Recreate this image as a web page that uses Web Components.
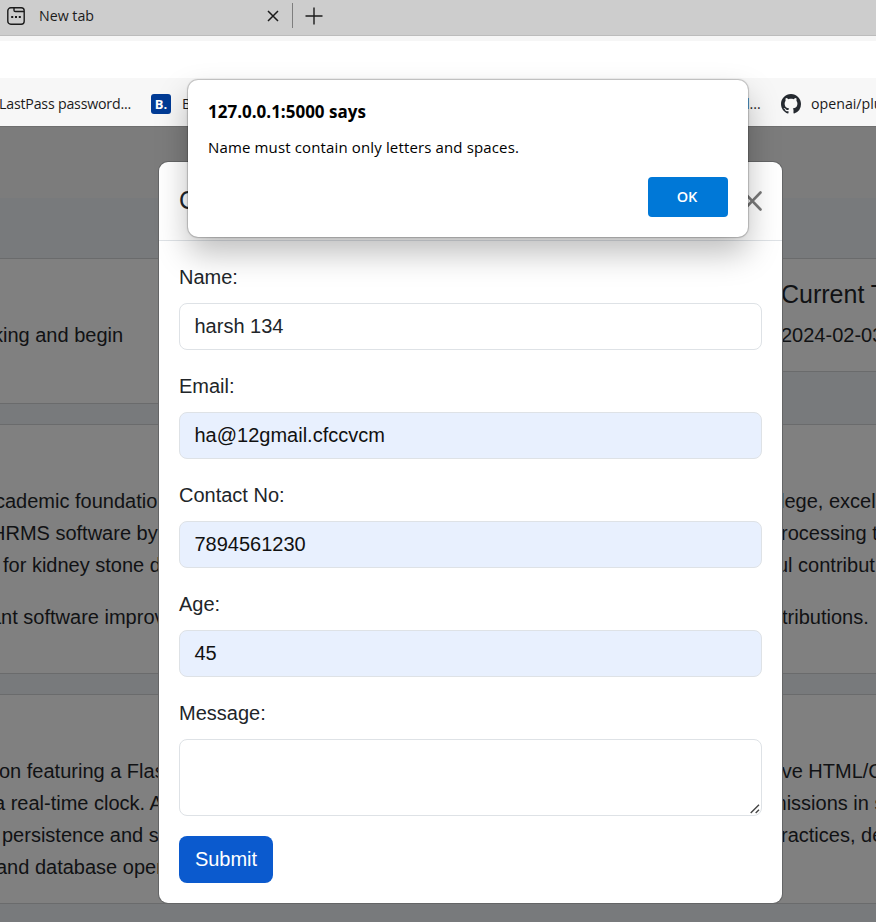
<!DOCTYPE html>
<html lang="en"><head><meta charset="utf-8"><title>Contact form</title>
<style>html,body{margin:0;height:100%;overflow:hidden}</style></head>
<body><app-screen></app-screen>
<script>
const define=(name,html,setup)=>customElements.define(name,class extends HTMLElement{
  connectedCallback(){
    if(this.shadowRoot)return;
    const t=document.createElement('template');
    t.innerHTML='<style>*{box-sizing:border-box}:host{box-sizing:border-box}</style>'+html;
    this.attachShadow({mode:'open'}).append(t.content.cloneNode(true));
    if(setup)setup(this,this.shadowRoot);
  }
});

define('tab-strip',`<style>
:host{display:flex;align-items:center;height:36px;padding:0 0 4px 7px;background:#cdcdcd;border-bottom:1px solid #bcbcbc;font:15px/20px "Open Sans","Noto Sans",sans-serif;color:#1b1b1b}
.title{width:228px;margin-left:14px;font-size:14.2px;white-space:nowrap}
.sep{width:1px;height:25px;background:#7e7e7e;margin:0 12px 0 13px}
svg{display:block;fill:none;stroke:#1b1b1b;flex:none}
</style>
<svg width="18" height="18" viewBox="0 0 18 18" stroke-width="1.4"><rect x=".8" y=".8" width="16.4" height="16.4" rx="3"/><path d="M7 1v2.2q0 1.3 1.3 1.3H17"/><path d="M4.2 10h2M8 10h2M11.8 10h2" stroke-width="2"/></svg>
<span class="title"><slot></slot></span>
<svg width="12" height="12" viewBox="0 0 12 12" stroke-width="1.5"><path d="M1 1l10 10M11 1L1 11"/></svg>
<span class="sep"></span>
<svg width="18" height="18" viewBox="0 0 18 18" stroke-width="1.4"><path d="M9 .5v17M.5 9h17"/></svg>`);

define('address-bar',`<style>:host{display:block;height:42px;background:#fff;border-top:5px solid #f6f6f6}</style>`);

define('bookmark-bar',`<style>
:host{display:flex;align-items:center;height:48px;padding:5px 0 1px;background:#f7f7f7;font:14.2px/20px "Open Sans","Noto Sans",sans-serif;color:#1b1b1b;white-space:nowrap;overflow:hidden}
.a{width:152px;margin-left:-1px;letter-spacing:-.2px}
.b{width:20px;height:20px;border-radius:3px;background:#003b95;color:#fff;font-weight:700;font-size:13px;text-align:center;margin-right:10px}
.c{width:564px;margin-left:1px}.d{width:35px}
svg{margin-right:10px;flex:none}span{flex:none}
</style>
<span class="a">LastPass password...</span><span class="b">B.</span><span class="c">B</span><span class="d">l...</span>
<svg width="20" height="20" viewBox="0 0 16 16" fill="#24292f"><path d="M8 0C3.58 0 0 3.58 0 8c0 3.54 2.29 6.53 5.47 7.59.4.07.55-.17.55-.38 0-.19-.01-.82-.01-1.49-2.01.37-2.53-.49-2.69-.94-.09-.23-.48-.94-.82-1.13-.28-.15-.68-.52-.01-.53.63-.01 1.08.58 1.23.82.72 1.21 1.87.87 2.33.66.07-.52.28-.87.51-1.07-1.78-.2-3.64-.89-3.64-3.95 0-.87.31-1.59.82-2.15-.08-.2-.36-1.02.08-2.12 0 0 .67-.21 2.2.82.64-.18 1.32-.27 2-.27s1.36.09 2 .27c1.53-1.04 2.2-.82 2.2-.82.44 1.1.16 1.92.08 2.12.51.56.82 1.27.82 2.15 0 3.07-1.87 3.75-3.65 3.95.29.25.54.73.54 1.48 0 1.07-.01 1.93-.01 2.2 0 .21.15.46.55.38A8.01 8.01 0 0016 8c0-4.42-3.58-8-8-8z"/></svg>
<span>openai/plu</span>`);

define('page-line',`<style>
:host{display:grid;grid-template-columns:781px 95px;height:32px;line-height:32px;white-space:nowrap}
.l{margin-left:var(--l,0)}.r{margin-left:var(--r,0)}
</style><span class="l"><slot></slot></span><span class="r"><slot name="right"></slot></span>`);

define('page-card',`<style>
:host{display:block;background:#808080;border:solid #6a6b6c;border-width:1px 0}
</style><slot></slot>`);

define('web-page',`<style>
:host{display:block;height:796px;background:#787a7c;color:#111214;font:20px/32px "Liberation Sans",Arial,sans-serif;overflow:hidden;border-top:1px solid #6f6f6f}
.nav{height:71px;background:#7c7c7c}
.top{display:grid;grid-template-columns:470px 406px;align-items:start;padding-top:60px;height:226px}
.one{height:146px;padding-top:60px}.two{height:114px;padding:17px 0 0 311px;white-space:nowrap}
.h{font-size:25px;line-height:36px;height:43px}
.about{height:250px;padding-top:60px}.gap{height:20px}
.about page-line:last-child{margin-top:20px}
.proj{height:210px;padding-top:60px}
</style>
<div class="nav"></div>
<div class="top">
<page-card class="one"><page-line style="--l:-7px">king and begin</page-line></page-card>
<page-card class="two"><div class="h">Current T</div><div>2024-02-03</div></page-card></div>
<page-card class="about">
<page-line style="--l:-5px;--r:-1px">cademic foundation<span slot="right">lege, excel</span></page-line>
<page-line style="--l:-9px">HRMS software by<span slot="right">rocessing t</span></page-line>
<page-line style="--l:3px;--r:-4px">for kidney stone d<span slot="right">ul contribut</span></page-line>
<page-line style="--l:-10px;--r:1px">ant software improv<span slot="right">tributions.</span></page-line>
</page-card><div class="gap"></div>
<page-card class="proj">
<page-line style="--l:-1px;--r:.7px">on featuring a Flas<span slot="right">ve HTML/C</span></page-line>
<page-line style="--l:-6px;--r:-11px">a real-time clock. A<span slot="right">missions in s</span></page-line>
<page-line style="--l:2px">persistence and s<span slot="right">ractices, de</span></page-line>
<page-line style="--l:-4px">and database oper</page-line>
</page-card>`);

define('form-field',`<style>
:host{display:block;padding-top:1px;margin-bottom:20px}
label{display:block;line-height:30px;height:30px;margin-bottom:11px}
.box{height:47px;border:1px solid #dee2e6;border-radius:8px;padding:0 14.5px;line-height:44px;background:#fff;position:relative}
:host([filled]) .box{background:#e8f0fe;color:#111}
:host([multiline]) .box{height:77px}
svg{display:none;position:absolute;right:1px;bottom:1px}
:host([multiline]) svg{display:block}
</style><label></label><div class="box"><slot></slot><svg width="10" height="10" viewBox="0 0 10 10" stroke="#444" stroke-width="1.4"><path d="M.7 9L9 .7M5.7 9L9 5.7"/></svg></div>`,
(h,r)=>{r.querySelector('label').textContent=h.getAttribute('label')});

define('contact-modal',`<style>
:host{display:block;background:#fff;border-radius:9px;box-shadow:0 0 0 1px #646566;font:20px/30px "Liberation Sans",Arial,sans-serif;color:#212529}
header{display:flex;justify-content:space-between;align-items:center;height:79px;padding:0 20px;border-bottom:1px solid #dee2e6;font-size:25px}
header span{position:relative;top:-1px}
main{padding:20px}
button{display:block;width:94px;height:47px;padding:0 0 2px;border:0;border-radius:8px;background:#0b5ace;color:#fff;font:inherit}
</style><header><span>Contact Me</span><svg width="18" height="20" viewBox="0 0 18 20" fill="none" stroke="#797979" stroke-width="2.6" stroke-linecap="round"><path d="M0 1.5L16.5 18.5M16.5 1.5L0 18.5"/></svg></header>
<main>
<form-field label="Name:">harsh 134</form-field>
<form-field label="Email:" filled>ha@12gmail.cfccvcm</form-field>
<form-field label="Contact No:" filled>7894561230</form-field>
<form-field label="Age:" filled>45</form-field>
<form-field label="Message:" multiline></form-field>
<button>Submit</button></main>`);

define('alert-dialog',`<style>
:host{display:flex;flex-direction:column;background:#fff;border-radius:10px;padding:20px;box-shadow:0 0 0 1px rgba(0,0,0,.13),0 0 3px rgba(0,0,0,.2),0 16px 32px rgba(0,0,0,.26);color:#000;font:15px/20px "Open Sans","Noto Sans",sans-serif}
h1{font:700 17px/24px "Open Sans","Noto Sans",sans-serif;margin:0 0 13px}
p{margin:0 0 20px;white-space:nowrap;letter-spacing:.14px}
button{align-self:flex-end;width:80px;height:40px;border:0;border-radius:4px;background:#0078d7;color:#fff;font:600 14.5px/20px "Open Sans",sans-serif;padding:0 2px 0 0}
</style><h1>127.0.0.1:5000 says</h1><p>Name must contain only letters and spaces.</p><button>OK</button>`);

define('app-screen',`<style>
:host{display:block;position:relative;width:876px;height:922px;overflow:hidden;background:#787a7c}
contact-modal{position:absolute;left:159px;top:162px;width:623px;height:741px}
alert-dialog{position:absolute;left:188px;top:80px;width:560px;height:157px}
</style><tab-strip>New tab</tab-strip><address-bar></address-bar><bookmark-bar></bookmark-bar><web-page></web-page><contact-modal></contact-modal><alert-dialog></alert-dialog>`);
</script></body></html>
